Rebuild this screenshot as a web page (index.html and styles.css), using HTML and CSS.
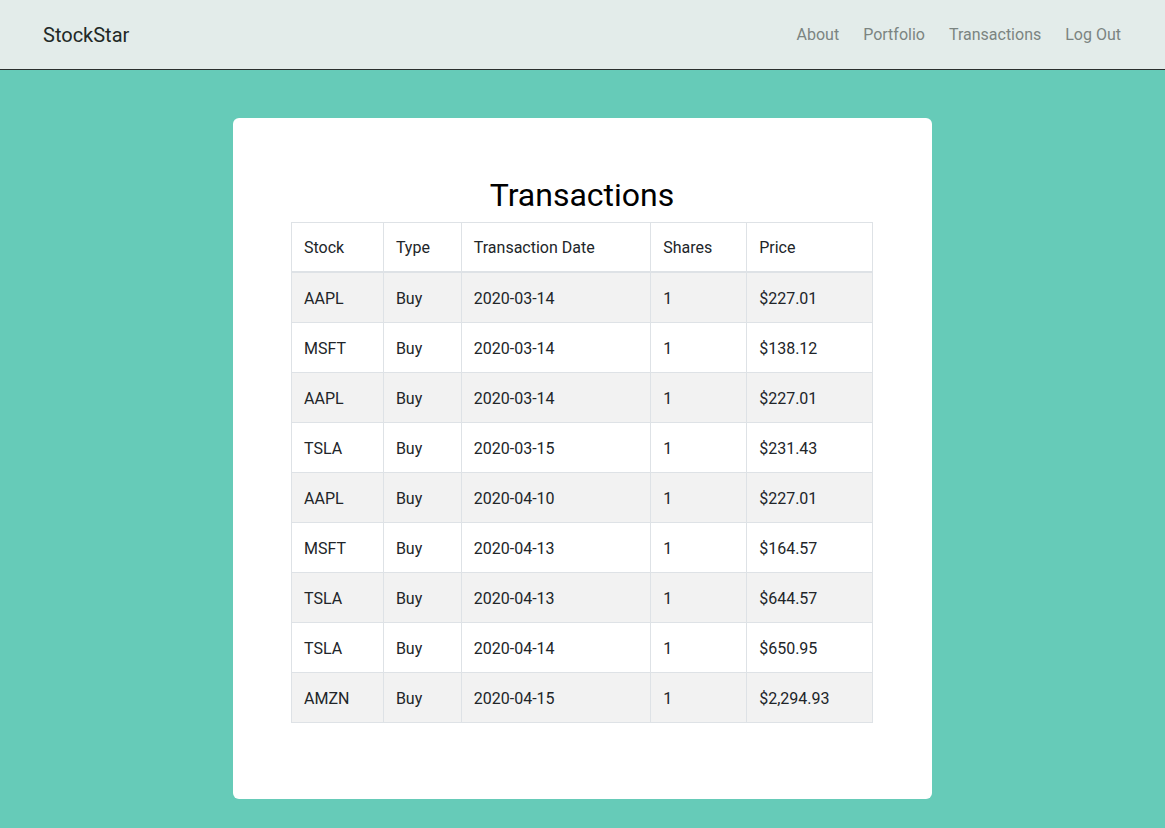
FILE: index.html
```html
<!DOCTYPE html>
<html>
<head>
<meta charset="utf-8">
<link rel="stylesheet" href="styles.css">
</head>
<body>
<nav class="navbar">
  <div class="brand">StockStar</div>
  <ul class="nav-links">
    <li>About</li>
    <li>Portfolio</li>
    <li>Transactions</li>
    <li>Log Out</li>
  </ul>
</nav>
<main class="main">
  <section class="card">
    <h1 class="title">Transactions</h1>
    <table class="tx-table">
      <colgroup>
        <col class="c-stock"><col class="c-type"><col class="c-date"><col class="c-shares"><col class="c-price">
      </colgroup>
      <thead>
        <tr><th>Stock</th><th>Type</th><th>Transaction Date</th><th>Shares</th><th>Price</th></tr>
      </thead>
      <tbody>
        <tr><td>AAPL</td><td>Buy</td><td>2020-03-14</td><td>1</td><td>$227.01</td></tr>
        <tr><td>MSFT</td><td>Buy</td><td>2020-03-14</td><td>1</td><td>$138.12</td></tr>
        <tr><td>AAPL</td><td>Buy</td><td>2020-03-14</td><td>1</td><td>$227.01</td></tr>
        <tr><td>TSLA</td><td>Buy</td><td>2020-03-15</td><td>1</td><td>$231.43</td></tr>
        <tr><td>AAPL</td><td>Buy</td><td>2020-04-10</td><td>1</td><td>$227.01</td></tr>
        <tr><td>MSFT</td><td>Buy</td><td>2020-04-13</td><td>1</td><td>$164.57</td></tr>
        <tr><td>TSLA</td><td>Buy</td><td>2020-04-13</td><td>1</td><td>$644.57</td></tr>
        <tr><td>TSLA</td><td>Buy</td><td>2020-04-14</td><td>1</td><td>$650.95</td></tr>
        <tr><td>AMZN</td><td>Buy</td><td>2020-04-15</td><td>1</td><td>$2,294.93</td></tr>
      </tbody>
    </table>
  </section>
</main>
</body>
</html>
```
FILE: styles.css
```css
html, body {
  margin: 0;
  padding: 0;
}
body {
  font-family: Roboto, "Liberation Sans", Arial, sans-serif;
  background: #66cbb8;
  color: #212529;
  min-height: 828px;
}
.navbar {
  height: 69px;
  background: #e3ecea;
  border-bottom: 1px solid #2a2f2e;
  display: flex;
  align-items: center;
  justify-content: space-between;
  padding: 0 44px 0 43px;
  box-sizing: content-box;
}
.brand {
  font-size: 20px;
  color: #222926;
}
.nav-links {
  list-style: none;
  margin: 0;
  padding: 0;
  display: flex;
  gap: 24px;
  font-size: 16px;
  color: #7b8481;
}
.main {
  display: flex;
  justify-content: center;
  padding-top: 48px;
}
.card {
  width: 699px;
  height: 681px;
  box-sizing: border-box;
  background: #fff;
  border-radius: 6px;
  padding: 58px 59px 0 58px;
}
.title {
  margin: 0 0 8px;
  text-align: center;
  font-size: 32px;
  font-weight: 400;
  line-height: 38px;
  color: #000;
}
.tx-table {
  width: 582px;
  border-collapse: collapse;
  font-size: 16px;
  color: #212529;
}
.c-stock { width: 92px; }
.c-type { width: 78px; }
.c-date { width: 190px; }
.c-shares { width: 96px; }
.c-price { width: 126px; }
.tx-table th, .tx-table td {
  border: 1px solid #dee2e6;
  padding: 13px 12px 11px;
  height: 25px;
  line-height: 24px;
  text-align: left;
  font-weight: 400;
}
.tx-table thead th {
  border-bottom: 2px solid #dee2e6;
  height: 24px;
}
.tx-table tbody tr:nth-child(odd) {
  background: #f2f2f2;
}
```
